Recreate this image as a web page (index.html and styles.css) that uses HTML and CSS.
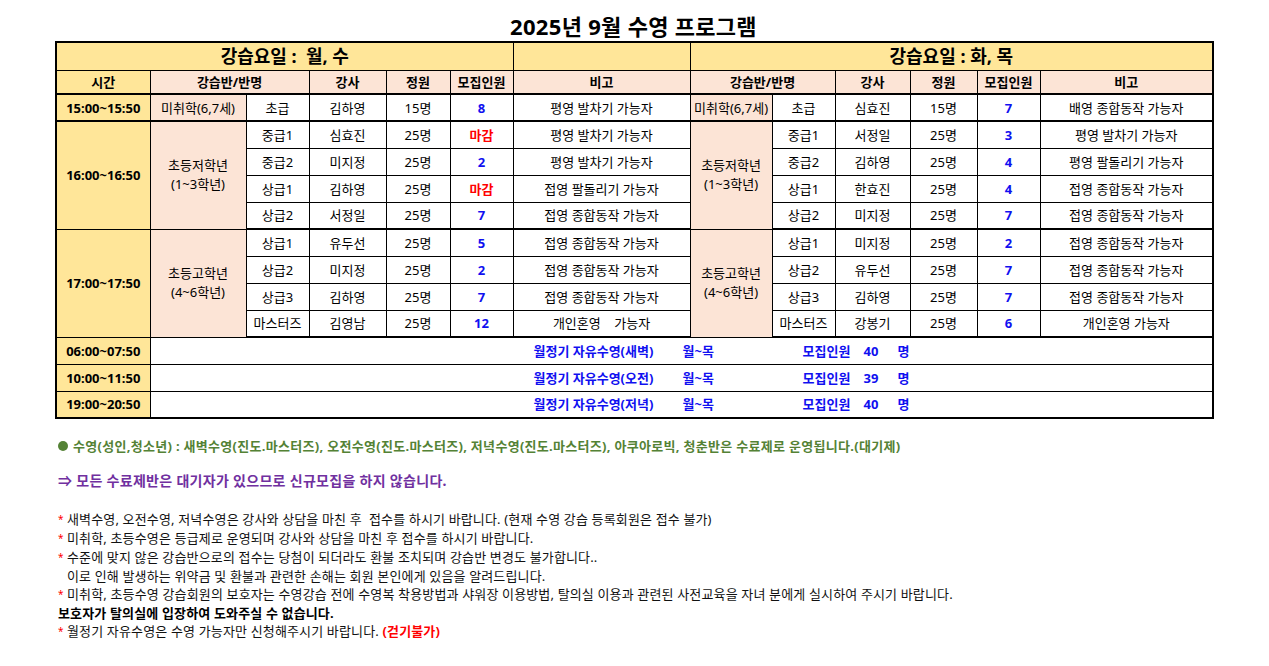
FILE: index.html
```html
<!DOCTYPE html>
<html lang="ko">
<head>
<meta charset="utf-8">
<title>2025년 9월 수영 프로그램</title>
<link rel="stylesheet" href="styles.css">
</head>
<body>
<div class="page">
  <h1 class="title">2025년 9월 수영 프로그램</h1>
  <table class="sched">
    <colgroup>
      <col class="c-time"><col class="c-grp"><col class="c-lvl"><col class="c-tch"><col class="c-cap"><col class="c-rec"><col class="c-note">
      <col class="c-grp2"><col class="c-lvl"><col class="c-tch2"><col class="c-cap2"><col class="c-rec"><col class="c-note2">
    </colgroup>
    <tr class="r-day">
      <td colspan="6" class="yel day">강습요일 :&nbsp; 월, 수</td>
      <td class="yel"></td>
      <td colspan="6" class="yel day">강습요일 : 화, 목</td>
    </tr>
    <tr class="r-head thick-b">
      <th class="yel">시간</th>
      <th colspan="2" class="pink">강습반/반명</th>
      <th class="pink">강사</th>
      <th class="pink">정원</th>
      <th class="pink">모집인원</th>
      <th class="pink">비고</th>
      <th colspan="2" class="pink">강습반/반명</th>
      <th class="pink">강사</th>
      <th class="pink">정원</th>
      <th class="pink">모집인원</th>
      <th class="pink">비고</th>
    </tr>
    <tr class="r thick-b">
      <td class="yel time">15:00~15:50</td>
      <td class="pink">미취학(6,7세)</td>
      <td>초급</td><td>김하영</td><td>15명</td><td class="num">8</td><td>평영 발차기 가능자</td>
      <td class="pink">미취학(6,7세)</td>
      <td>초급</td><td>심효진</td><td>15명</td><td class="num">7</td><td>배영 종합동작 가능자</td>
    </tr>
    <tr class="r">
      <td rowspan="4" class="yel time">16:00~16:50</td>
      <td rowspan="4" class="pink grp">초등저학년<br>(1~3학년)</td>
      <td>중급1</td><td>심효진</td><td>25명</td><td class="closed">마감</td><td>평영 발차기 가능자</td>
      <td rowspan="4" class="pink grp">초등저학년<br>(1~3학년)</td>
      <td>중급1</td><td>서정일</td><td>25명</td><td class="num">3</td><td>평영 발차기 가능자</td>
    </tr>
    <tr class="r">
      <td>중급2</td><td>미지정</td><td>25명</td><td class="num">2</td><td>평영 발차기 가능자</td>
      <td>중급2</td><td>김하영</td><td>25명</td><td class="num">4</td><td>평영 팔돌리기 가능자</td>
    </tr>
    <tr class="r">
      <td>상급1</td><td>김하영</td><td>25명</td><td class="closed">마감</td><td>접영 팔돌리기 가능자</td>
      <td>상급1</td><td>한효진</td><td>25명</td><td class="num">4</td><td>접영 종합동작 가능자</td>
    </tr>
    <tr class="r thick-b">
      <td>상급2</td><td>서정일</td><td>25명</td><td class="num">7</td><td>접영 종합동작 가능자</td>
      <td>상급2</td><td>미지정</td><td>25명</td><td class="num">7</td><td>접영 종합동작 가능자</td>
    </tr>
    <tr class="r">
      <td rowspan="4" class="yel time">17:00~17:50</td>
      <td rowspan="4" class="pink grp">초등고학년<br>(4~6학년)</td>
      <td>상급1</td><td>유두선</td><td>25명</td><td class="num">5</td><td>접영 종합동작 가능자</td>
      <td rowspan="4" class="pink grp">초등고학년<br>(4~6학년)</td>
      <td>상급1</td><td>미지정</td><td>25명</td><td class="num">2</td><td>접영 종합동작 가능자</td>
    </tr>
    <tr class="r">
      <td>상급2</td><td>미지정</td><td>25명</td><td class="num">2</td><td>접영 종합동작 가능자</td>
      <td>상급2</td><td>유두선</td><td>25명</td><td class="num">7</td><td>접영 종합동작 가능자</td>
    </tr>
    <tr class="r">
      <td>상급3</td><td>김하영</td><td>25명</td><td class="num">7</td><td>접영 종합동작 가능자</td>
      <td>상급3</td><td>김하영</td><td>25명</td><td class="num">7</td><td>접영 종합동작 가능자</td>
    </tr>
    <tr class="r thick-b">
      <td>마스터즈</td><td>김영남</td><td>25명</td><td class="num">12</td><td>개인혼영&nbsp;&nbsp;&nbsp; 가능자</td>
      <td>마스터즈</td><td>강봉기</td><td>25명</td><td class="num">6</td><td>개인혼영 가능자</td>
    </tr>
    <tr class="r">
      <td class="yel time">06:00~07:50</td>
      <td colspan="12" class="free"><div class="free-line"><span class="f-name">월정기 자유수영(새벽)</span><span class="f-day">월~목</span><span class="f-lab">모집인원</span><span class="f-num">40</span><span>명</span></div></td>
    </tr>
    <tr class="r">
      <td class="yel time">10:00~11:50</td>
      <td colspan="12" class="free"><div class="free-line"><span class="f-name">월정기 자유수영(오전)</span><span class="f-day">월~목</span><span class="f-lab">모집인원</span><span class="f-num">39</span><span>명</span></div></td>
    </tr>
    <tr class="r">
      <td class="yel time">19:00~20:50</td>
      <td colspan="12" class="free"><div class="free-line"><span class="f-name">월정기 자유수영(저녁)</span><span class="f-day">월~목</span><span class="f-lab">모집인원</span><span class="f-num">40</span><span>명</span></div></td>
    </tr>
  </table>

  <div class="notes">
    <p class="green"><span class="dot"></span>수영(성인,청소년) : 새벽수영(진도.마스터즈), 오전수영(진도.마스터즈), 저녁수영(진도.마스터즈), 아쿠아로빅, 청춘반은 수료제로 운영됩니다.(대기제)</p>
    <p class="purple">⇒ 모든 수료제반은 대기자가 있으므로 신규모집을 하지 않습니다.</p>
    <div class="fns">
      <p class="fn"><span class="ast">*</span>새벽수영, 오전수영, 저녁수영은 강사와 상담을 마친 후&nbsp; 접수를 하시기 바랍니다. (현재 수영 강습 등록회원은 접수 불가)</p>
      <p class="fn"><span class="ast">*</span>미취학, 초등수영은 등급제로 운영되며 강사와 상담을 마친 후 접수를 하시기 바랍니다.</p>
      <p class="fn"><span class="ast">*</span>수준에 맞지 않은 강습반으로의 접수는 당첨이 되더라도 환불 조치되며 강습반 변경도 불가합니다..</p>
      <p class="fn indent">이로 인해 발생하는 위약금 및 환불과 관련한 손해는 회원 본인에게 있음을 알려드립니다.</p>
      <p class="fn"><span class="ast">*</span>미취학, 초등수영 강습회원의 보호자는 수영강습 전에 수영복 착용방법과 샤워장 이용방법, 탈의실 이용과 관련된 사전교육을 자녀 분에게 실시하여 주시기 바랍니다.</p>
      <p class="fn strong">보호자가 탈의실에 입장하여 도와주실 수 없습니다.</p>
      <p class="fn"><span class="ast">*</span>월정기 자유수영은 수영 가능자만 신청해주시기 바랍니다. <b class="red">(걷기불가)</b></p>
    </div>
  </div>
</div>
</body>
</html>
```

FILE: styles.css
```css
html, body {
  margin: 0;
  padding: 0;
  background: #ffffff;
}
body {
  font-family: "Noto Sans", "Noto Sans CJK KR", sans-serif;
  color: #000;
}
.page {
  padding-left: 55px;
  width: 1157px;
}
.title {
  margin: 11px 0 0 0;
  height: 30px;
  line-height: 30px;
  font-size: 22px;
  letter-spacing: 0.3px;
  font-weight: bold;
  text-align: center;
}
.sched {
  border-collapse: collapse;
  table-layout: fixed;
  width: 1157px;
  border: 2px solid #000;
  font-size: 13px;
}
.c-time { width: 94px; }
.c-grp { width: 96px; }
.c-lvl { width: 63px; }
.c-tch { width: 77px; }
.c-cap { width: 64px; }
.c-rec { width: 63px; }
.c-note { width: 177px; }
.c-grp2 { width: 82px; }
.c-tch2 { width: 75px; }
.c-cap2 { width: 67px; }
.c-note2 { width: 173px; }

.sched td, .sched th {
  border: 1px solid #000;
  padding: 0;
  text-align: center;
  vertical-align: middle;
  line-height: 18px;
  white-space: nowrap;
  overflow: hidden;
}
.sched th { font-weight: bold; }
.r-day { height: 28px; }
.r-head { height: 24px; }
.r { height: 27px; }
.thick-b > td, .thick-b > th { border-bottom: 2px solid #000; }
.yel { background: #ffe699; }
.pink { background: #fce4d6; }
.day { font-size: 18px; font-weight: bold; line-height: 22px !important; }
.time { font-weight: bold; }
.grp { line-height: 19px !important; }
.num { color: #1010f0; font-weight: bold; }
.closed { color: #ff0000; font-weight: bold; }

.free { text-align: left !important; }
.free-line {
  display: flex;
  padding-left: 383px;
  color: #1010f0;
  font-weight: bold;
}
.f-name { width: 149px; }
.f-day { width: 120px; }
.f-lab { width: 61px; }
.f-num { width: 34px; }

.notes {
  padding-left: 3px;
  margin-top: 18px;
}
.notes p { margin: 0; }
.green {
  color: #548235;
  font-weight: bold;
  font-size: 13px;
  letter-spacing: 0.3px;
  line-height: 18px;
  display: flex;
  align-items: center;
}
.dot {
  display: inline-block;
  width: 10px;
  height: 10px;
  border-radius: 50%;
  background: #548235;
  margin-right: 5px;
}
.purple {
  color: #7030a0;
  font-weight: bold;
  font-size: 14px;
  letter-spacing: 0.3px;
  line-height: 18px;
  margin-top: 17px !important;
}
.fns { margin-top: 20px; }
.fn {
  font-size: 13px;
  line-height: 18px;
  letter-spacing: 0.15px;
  color: #111;
}
.ast {
  color: #ff0000;
  display: inline-block;
  width: 9px;
  font-size: 10px;
  letter-spacing: 0;
  position: relative;
  top: -1px;
}
.indent { padding-left: 9px; }
.strong { font-weight: bold; color: #000; }
.red { color: #ff0000; }
```
